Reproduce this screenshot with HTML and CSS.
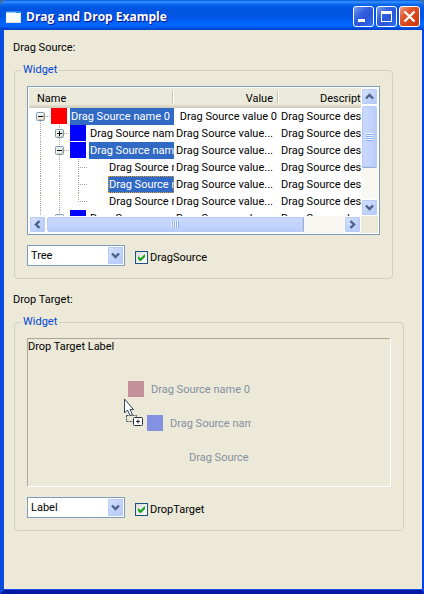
FILE: index.html
```html
<!DOCTYPE html>
<html lang="en">
<head>
<meta charset="utf-8">
<title>Drag and Drop Example</title>
<link rel="stylesheet" href="styles.css">
</head>
<body>
<svg class="defs" aria-hidden="true">
  <defs>
    <symbol id="g-v" viewBox="0 0 19 17"><path class="dots" d="M9.500 0V17"/></symbol>
    <symbol id="g-t" viewBox="0 0 19 17"><path class="dots" d="M9.500 0V17M9 8.500H19"/></symbol>
    <symbol id="g-l" viewBox="0 0 19 17"><path class="dots" d="M9.500 0V9M9 8.500H19"/></symbol>
    <symbol id="g-box" viewBox="0 0 19 17">
      <rect x="5.500" y="4.500" width="8" height="8" rx="1" fill="#f1f0ea" stroke="#7898b5"/>
      <path d="M7 11.500H13M12.500 6V12" stroke="#d0cab8"/>
      <path d="M7 8.500H12" stroke="#000"/>
      <path class="dots" d="M14 8.500H19"/>
    </symbol>
    <symbol id="g-root" viewBox="0 0 19 17"><path class="dots" d="M9.500 13V17"/><use href="#g-box"/></symbol>
    <symbol id="g-minus" viewBox="0 0 19 17"><path class="dots" d="M9.500 0V4M9.500 13V17"/><use href="#g-box"/></symbol>
    <symbol id="g-plus" viewBox="0 0 19 17"><use href="#g-minus"/><path d="M9.500 6V11" stroke="#000"/></symbol>
    <symbol id="chev" viewBox="0 0 9 9"><path d="M1 2.500L4.500 6L8 2.500" fill="none" stroke="#4d6185" stroke-width="2.400"/></symbol>
  </defs>
</svg>
<div class="window">
  <header class="titlebar">
    <svg class="app-icon" width="15" height="12" viewBox="0 0 15 12"><path fill="#fff" d="M0 2H15V12H0z"/><path fill="#2a86e8" d="M0 0H15V2H0z"/><path fill="#8cc8f8" d="M0 1H10V2H0z"/><path fill="#e4e0d4" d="M14 3H15V12H1V11H14z"/></svg>
    <h1>Drag and Drop Example</h1>
    <div class="controls">
      <button type="button" aria-label="Minimize"><svg width="19" height="19"><path fill="#fff" d="M4 12h7v3H4z"/></svg></button>
      <button type="button" aria-label="Maximize"><svg width="19" height="19"><path fill="#fff" fill-rule="evenodd" d="M4 4h11v11H4zM5 7v7h9V7z"/></svg></button>
      <button type="button" class="close" aria-label="Close"><svg width="19" height="19"><path stroke="#fff" stroke-width="2.300" d="M4.500 4.500L14.500 14.500M14.500 4.500L4.500 14.500"/></svg></button>
    </div>
  </header>
  <main>
    <section class="source">
      <h2>Drag Source:</h2>
      <fieldset>
        <legend>Widget</legend>
        <div class="tree">
          <div class="view">
            <table>
              <colgroup><col class="c-name"><col class="c-value"><col class="c-desc"></colgroup>
              <thead><tr><th>Name</th><th class="num">Value</th><th class="desc">Description</th></tr></thead>
              <tbody>
                <tr><td><div class="node"><svg><use href="#g-root"/></svg><i class="red"></i><span class="sel">Drag Source name 0</span></div></td><td class="num">Drag Source value 0</td><td>Drag Source description</td></tr>
                <tr><td><div class="node"><svg><use href="#g-v"/></svg><svg><use href="#g-plus"/></svg><i class="blue"></i><span>Drag Source name</span></div></td><td>Drag Source value...</td><td>Drag Source description</td></tr>
                <tr><td><div class="node"><svg><use href="#g-v"/></svg><svg><use href="#g-minus"/></svg><i class="blue"></i><span class="sel">Drag Source name</span></div></td><td>Drag Source value...</td><td>Drag Source description</td></tr>
                <tr><td><div class="node"><svg><use href="#g-v"/></svg><svg><use href="#g-v"/></svg><svg><use href="#g-t"/></svg><i></i><span>Drag Source name</span></div></td><td>Drag Source value...</td><td>Drag Source description</td></tr>
                <tr><td><div class="node"><svg><use href="#g-v"/></svg><svg><use href="#g-v"/></svg><svg><use href="#g-t"/></svg><i></i><span class="sel focus">Drag Source name</span></div></td><td>Drag Source value...</td><td>Drag Source description</td></tr>
                <tr><td><div class="node"><svg><use href="#g-v"/></svg><svg><use href="#g-v"/></svg><svg><use href="#g-l"/></svg><i></i><span>Drag Source name</span></div></td><td>Drag Source value...</td><td>Drag Source description</td></tr>
                <tr><td><div class="node"><svg><use href="#g-v"/></svg><svg><use href="#g-plus"/></svg><i class="blue"></i><span>Drag Source name</span></div></td><td>Drag Source value...</td><td>Drag Source description</td></tr>
              </tbody>
            </table>
          </div>
          <div class="bar vert">
            <button type="button" aria-label="Scroll up"><svg class="up"><use href="#chev"/></svg></button>
            <div class="thumb"><span class="grip"></span></div>
            <button type="button" aria-label="Scroll down"><svg><use href="#chev"/></svg></button>
          </div>
          <div class="bar horiz">
            <button type="button" aria-label="Scroll left"><svg class="left"><use href="#chev"/></svg></button>
            <div class="thumb"><span class="grip"></span></div>
            <button type="button" aria-label="Scroll right"><svg class="right"><use href="#chev"/></svg></button>
          </div>
        </div>
        <div class="options">
          <div class="combo"><select aria-label="Source widget"><option>Tree</option></select><span class="arrow"><svg><use href="#chev"/></svg></span></div>
          <label><input type="checkbox" checked>DragSource</label>
        </div>
      </fieldset>
    </section>
    <section class="target">
      <h2>Drop Target:</h2>
      <fieldset>
        <legend>Widget</legend>
        <div class="drop">Drop Target Label
          <div class="ghost">
            <div><i></i><span>Drag Source name 0</span></div>
            <div class="child"><i class="b"></i><span>Drag Source name</span></div>
            <div class="leaf"><span>Drag Source</span></div>
          </div>
          <svg class="cursor" width="21" height="30" viewBox="0 0 21 30">
            <rect x="3.500" y="17.500" width="10" height="6" fill="#ece9d8" stroke="#3c4a5c" stroke-dasharray="2 1"/>
            <path d="M1.500 1V15L4.500 12L7 17.500L9.500 16.500L7 11.500H10.500Z" fill="#fff" stroke="#35425a"/>
            <rect x="10.500" y="19.500" width="9" height="8" rx="1" fill="#fff" stroke="#222c3a"/>
            <path d="M13 23.500H17M15 21.500V25.500" stroke="#222c3a"/>
          </svg>
        </div>
        <div class="options">
          <div class="combo"><select aria-label="Target widget"><option>Label</option></select><span class="arrow"><svg><use href="#chev"/></svg></span></div>
          <label><input type="checkbox" checked>DropTarget</label>
        </div>
      </fieldset>
    </section>
  </main>
</div>
</body>
</html>
```
FILE: styles.css
```css
* { box-sizing: border-box; }
body {
  margin: 0;
  background: #3a6ea5;
  font: 11px/15px Roboto, "Liberation Sans", sans-serif;
  color: #000;
}
h1, h2 { margin: 0; font-size: 11px; font-weight: 400; }
button { padding: 0; font: inherit; }
svg { display: block; }
.defs { position: absolute; width: 0; height: 0; }
.dots { fill: none; stroke: #aca899; stroke-dasharray: 1 1; }

.window {
  display: flex;
  flex-direction: column;
  min-height: 100vh;
  border-radius: 7px 7px 0 0;
  overflow: hidden;
}
.titlebar {
  display: flex;
  align-items: center;
  gap: 5px;
  height: 30px;
  padding: 3px 4px 0 6px;
  background: linear-gradient(#0058e6 0, #3a93ff 2px, #0a6af2 4px, #0055e0 8px, #0054e3 16px, #0062fc 22px, #0066ff 26px, #0050e0 28px, #0040c0 30px);
}
.titlebar h1 {
  flex: 1;
  color: #fff;
  font: bold 12px/18px "Open Sans", sans-serif;
  text-shadow: 1px 1px #0f1089;
  white-space: nowrap;
}
.controls { display: flex; gap: 2px; }
.controls button {
  width: 21px;
  height: 21px;
  border: 1px solid #fff;
  border-radius: 3px;
  background: linear-gradient(135deg, #7a9bf0, #3563e0 35%, #2a55d8 60%, #2f70f0);
}
.controls .close { background: linear-gradient(135deg, #f0a088, #e0552c 35%, #d84518 65%, #c83a10); }

main {
  flex: 1;
  padding: 10px 18px 10px 9px;
  background: #ece9d8;
  border: solid;
  border-color: #0a4be0 #0044ee #0019a0 #0a4be0;
  border-width: 0 2px 4px 4px;
  box-shadow: inset 0 -1px #0a50e8;
}
section + section { margin-top: 13px; }
.source fieldset { margin-right: 11px; }
fieldset {
  min-width: 0;
  margin: 8px 0 0 1px;
  padding: 9px 12px 12px;
  border: 1px solid #d0d0bf;
  border-radius: 4px;
}
legend {
  margin-left: -6px;
  padding: 0 2px;
  line-height: 14px;
  color: #0046d5;
}

.tree {
  display: grid;
  grid-template: 128px 17px / 1fr 17px;
  padding: 1px;
  border: 1px solid #7f9db9;
  background: #ece9d8;
  box-shadow: inset 0 0 0 1px #fff;
}
.view { overflow: hidden; background: #fff; }
table {
  width: 400px;
  table-layout: fixed;
  border-collapse: collapse;
}
.c-name { width: 145px; }
.c-value { width: 105px; }
th {
  height: 20px;
  padding: 0 6px 0 8px;
  background: linear-gradient(#ebeadb 0, #ebeadb 17px, #e2decd 17px, #d6d2c2 19px, #cbc7b8 20px);
  font-weight: 400;
  text-align: left;
  position: relative;
}
th:not(:last-child)::after {
  content: "";
  position: absolute;
  top: 3px;
  right: 0;
  width: 2px;
  height: 13px;
  background: linear-gradient(90deg, #c7c5b2 50%, #fff 50%);
}
th.desc { padding-left: 41px; }
td {
  height: 17px;
  padding: 0 2px;
  line-height: 17px;
  white-space: nowrap;
  overflow: hidden;
}
td:first-child { padding: 0 0 0 2px; }
.num { text-align: right; }
.node { display: flex; height: 17px; overflow: hidden; }
.node svg { flex: none; width: 19px; height: 17px; }
.node i { flex: none; width: 16px; height: 16px; margin: 0 3px 0 1px; }
.node span { flex: 1; min-width: 0; padding: 0 1px; overflow: hidden; }
.node .sel { background: #316ac5; color: #fff; }
.node .focus { outline: 1px dotted #e0a030; outline-offset: -1px; }
.red { background: #f00; }
.blue { background: #00f; }

.bar { display: flex; background: #f8f7f1; }
.vert { flex-direction: column; }
.bar button, .bar .thumb, .arrow {
  display: flex;
  align-items: center;
  justify-content: center;
  border: 1px solid #fff;
  border-radius: 3px;
  background: linear-gradient(135deg, #d8e4fd, #c2d3fc 50%, #b4c8f6);
  box-shadow: inset 0 0 0 1px #b8cbf6;
}
.bar button { flex: none; width: 17px; height: 17px; border-radius: 2px; }
.bar svg, .arrow svg { width: 9px; height: 9px; }
.up { transform: rotate(180deg); }
.left { transform: rotate(90deg); }
.right { transform: rotate(-90deg); }
.vert .thumb { height: 63px; margin-bottom: auto; background: linear-gradient(90deg, #cad9fd, #c2d3fd 60%, #b6caf8); border-bottom-color: #98b0d8; }
.horiz .thumb { width: 258px; margin-right: auto; background: linear-gradient(#cad9fd, #c2d3fd 60%, #b6caf8); border-right-color: #98b0d8; }
.grip { width: 7px; height: 8px; background: repeating-linear-gradient(#eef4fe 0 1px, #8cb0f8 1px 2px); }
.horiz .grip { width: 8px; height: 7px; background: repeating-linear-gradient(90deg, #eef4fe 0 1px, #8cb0f8 1px 2px); }

.options { display: flex; gap: 10px; margin-top: 10px; }
.combo { position: relative; width: 98px; height: 21px; }
select {
  appearance: none;
  width: 100%;
  height: 100%;
  padding: 0 20px 0 3px;
  border: 1px solid #7f9db9;
  border-radius: 0;
  background: #fff;
  color: #000;
  font: inherit;
}
.arrow {
  position: absolute;
  top: 2px;
  right: 2px;
  width: 15px;
  height: 17px;
  border: 0;
  border-radius: 1px;
  pointer-events: none;
}
label { display: flex; align-items: center; gap: 2px; padding-top: 4px; }
input {
  appearance: none;
  width: 13px;
  height: 13px;
  margin: 0;
  border: 1px solid #1c5180;
  background: linear-gradient(135deg, #dcdcd7, #fff);
}
input:checked::before {
  content: "";
  display: block;
  width: 7px;
  height: 7px;
  margin: 2px;
  background: #21a121;
  clip-path: polygon(0 28%, 0 70%, 28% 100%, 42% 100%, 100% 42%, 100% 0, 36% 60%);
}

.drop {
  position: relative;
  height: 149px;
  border: 1px solid;
  border-color: #aca899 #fff #fff #aca899;
}
.ghost {
  position: absolute;
  top: 42px;
  left: 100px;
  width: 123px;
  overflow: hidden;
  color: #8490a0;
  white-space: nowrap;
}
.ghost div { display: flex; gap: 7px; height: 34px; line-height: 17px; }
.ghost i { flex: none; width: 16px; height: 16px; background: #c4909a; }
.ghost .b { background: #8490e0; }
.ghost .child { padding-left: 19px; }
.ghost .leaf { height: 17px; padding-left: 61px; }
.cursor { position: absolute; top: 59px; left: 95px; }
```
